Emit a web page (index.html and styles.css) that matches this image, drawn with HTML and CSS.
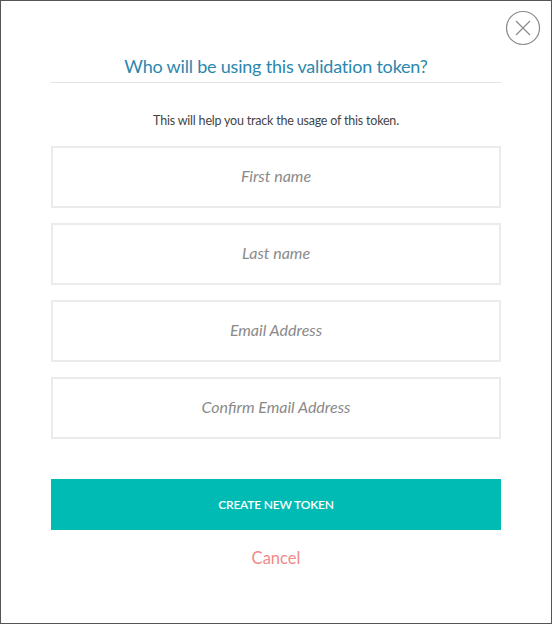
FILE: index.html
```html
<!DOCTYPE html>
<html lang="en">
<head>
    <meta charset="UTF-8">
    <title>New validation token</title>
    <link rel="stylesheet" href="styles.css">
</head>
<body>
    <div class="modal">
        <a href="javascript:;" class="close" title="Close">
            <svg width="36" height="36" viewBox="0 0 36 36">
                <circle cx="18" cy="18" r="16.5" fill="none" stroke="#8a8a8a" stroke-width="1.2"/>
                <path d="M11 11L25 25M25 11L11 25" stroke="#8a8a8a" stroke-width="1.2" fill="none"/>
            </svg>
        </a>
        <h2 class="title">Who will be using this validation token?</h2>
        <p class="subtitle">This will help you track the usage of this token.</p>
        <form class="token-form">
            <input type="text" placeholder="First name">
            <input type="text" placeholder="Last name">
            <input type="text" placeholder="Email Address">
            <input type="text" placeholder="Confirm Email Address">
            <button type="button" class="btn-create">CREATE NEW TOKEN</button>
            <a href="javascript:;" class="cancel">Cancel</a>
        </form>
    </div>
</body>
</html>
```

FILE: styles.css
```css
html,body{margin: 0;padding: 0;background: #fff;}
body{font-family: Lato, "Liberation Sans", sans-serif;}
.modal{position: relative;width: 552px;height: 624px;box-sizing: border-box;border: 1px solid #555;padding: 0 50px;}
.close{position: absolute;top: 9px;right: 10px;width: 36px;height: 36px;display: block;}
.close svg{display: block;}
.title{margin: 53px 0 0;padding-bottom: 4px;border-bottom: 1px solid #e3e3e3;font-size: 18px;line-height: 24px;font-weight: normal;color: #2b87ad;text-align: center;letter-spacing: -0.2px;}
.subtitle{margin: 29px 0 0;font-size: 12.5px;line-height: 18px;color: #444;text-align: center;letter-spacing: -0.2px;}
.token-form{display: flex;flex-direction: column;gap: 15px;margin-top: 16px;}
.token-form input{height: 62px;box-sizing: border-box;border: 2px solid #ebebeb;margin: 0;padding: 0 10px 4px;font-family: inherit;font-size: 16px;font-style: italic;text-align: center;color: #444;outline: none;}
.token-form input::placeholder{color: #8a8a8a;}
.btn-create{height: 51px;margin-top: 25px;border: 0;background: #00bbb4;color: #fff;font-family: inherit;font-size: 12px;font-weight: 600;letter-spacing: -0.2px;cursor: pointer;}
.cancel{display: block;margin-top: 3px;text-align: center;font-size: 16.5px;line-height: 20px;color: #f08a8a;text-decoration: none;}
```
